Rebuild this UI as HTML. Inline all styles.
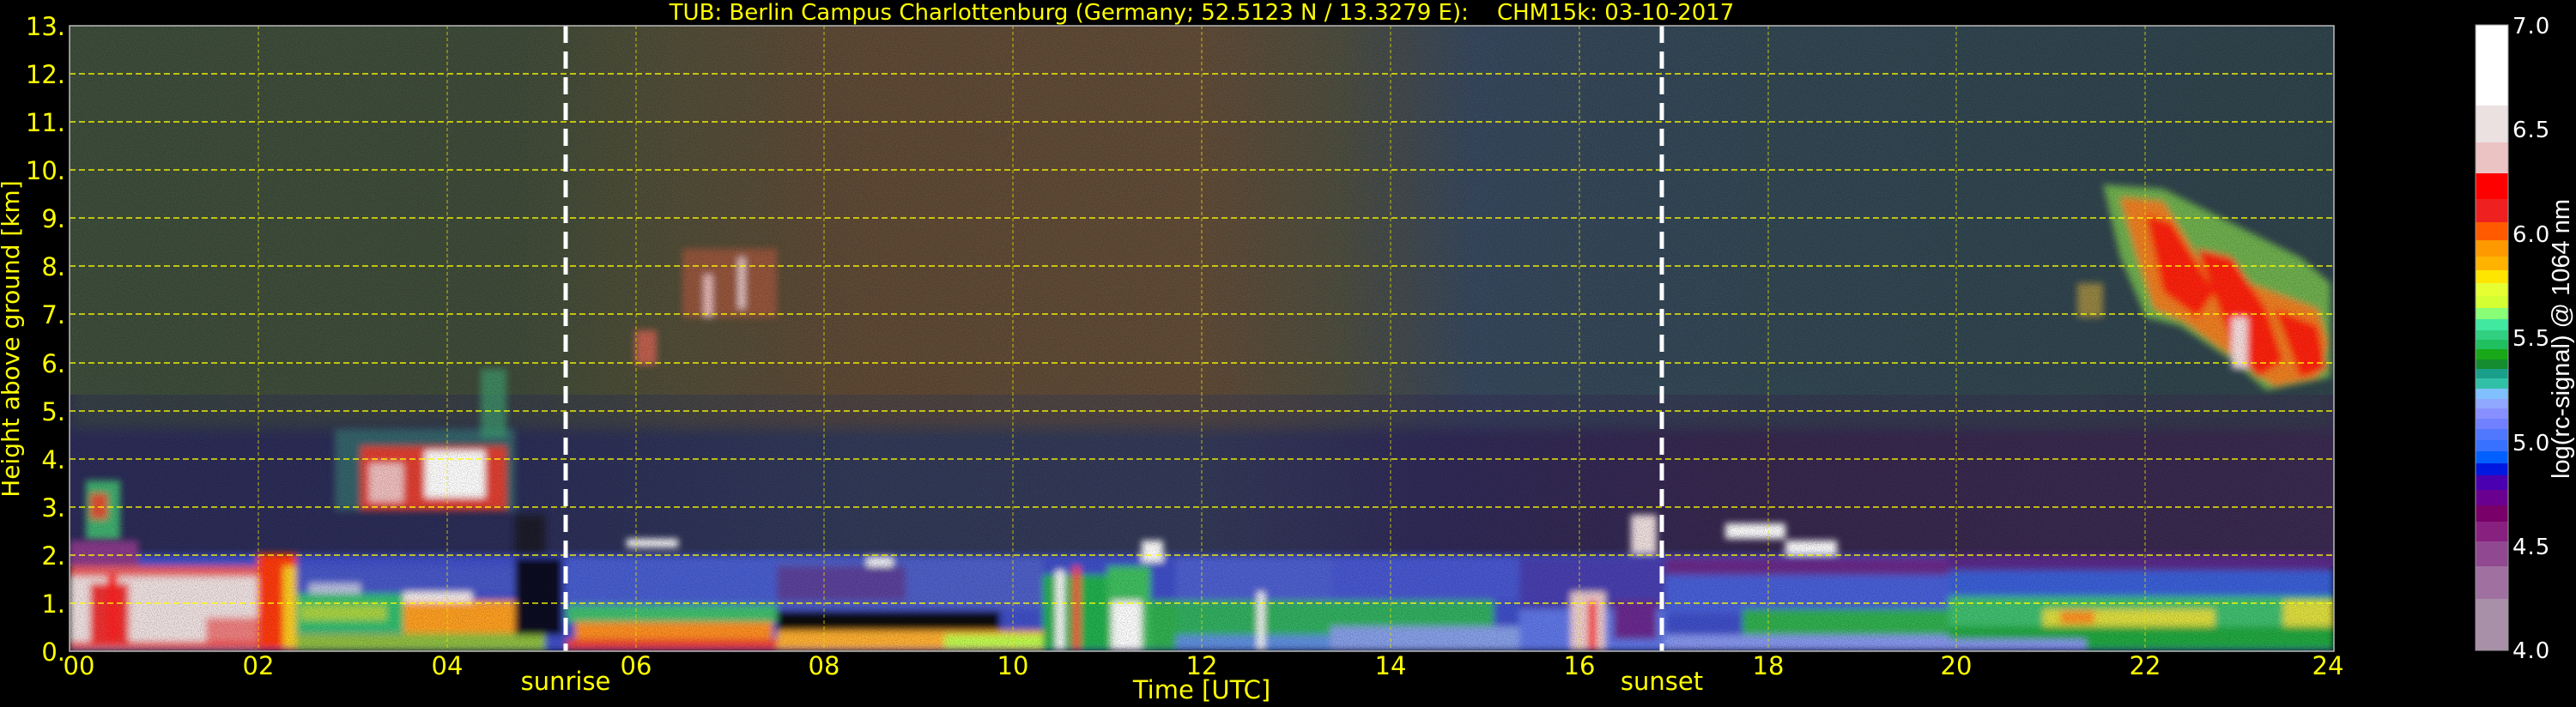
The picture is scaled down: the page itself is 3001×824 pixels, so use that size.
<!DOCTYPE html>
<html><head><meta charset="utf-8"><style>
html,body{margin:0;padding:0;background:#000;}
body{width:3001px;height:824px;overflow:hidden;position:relative;font-family:"Liberation Sans","DejaVu Sans",sans-serif;}
svg{position:absolute;left:0;top:0;}
</style></head><body>
<svg width="3001" height="824" viewBox="0 0 3001 824" xmlns="http://www.w3.org/2000/svg">
<defs>
<linearGradient id="up" x1="81" x2="2719" y1="0" y2="0" gradientUnits="userSpaceOnUse">
<stop offset="0" stop-color="#3e4e3c"/><stop offset="0.2" stop-color="#404c3a"/>
<stop offset="0.26" stop-color="#504e38"/><stop offset="0.35" stop-color="#604a36"/>
<stop offset="0.5" stop-color="#624c38"/><stop offset="0.56" stop-color="#4e4e40"/>
<stop offset="0.62" stop-color="#38485e"/><stop offset="0.75" stop-color="#334854"/>
<stop offset="1" stop-color="#30444c"/></linearGradient>
<linearGradient id="mid" x1="81" x2="2719" y1="0" y2="0" gradientUnits="userSpaceOnUse">
<stop offset="0" stop-color="#2c2c58"/><stop offset="0.2" stop-color="#2c2e58"/>
<stop offset="0.35" stop-color="#323a58"/><stop offset="0.5" stop-color="#343a58"/>
<stop offset="0.6" stop-color="#302a58"/><stop offset="0.75" stop-color="#38284e"/>
<stop offset="1" stop-color="#3a2a50"/></linearGradient>
<filter id="b3" x="-5%" y="-5%" width="110%" height="110%"><feGaussianBlur stdDeviation="4"/></filter>
<filter id="b8" x="-20%" y="-20%" width="140%" height="140%"><feGaussianBlur stdDeviation="8"/></filter>
<filter id="nz" x="0" y="0" width="100%" height="100%">
<feTurbulence type="fractalNoise" baseFrequency="0.9" numOctaves="1" seed="3"/>
<feColorMatrix values="0 0 0 0 0  0 0 0 0 0  0 0 0 0 0  0 0 0 -2.2 1.3"/></filter>
<clipPath id="pc"><rect x="81" y="30" width="2638" height="729"/></clipPath>
</defs>
<g clip-path="url(#pc)">
<rect x="81" y="30" width="2638" height="470" fill="url(#up)"/>
<rect x="81" y="460" width="2638" height="200" fill="url(#mid)"/>
<rect x="81" y="440" width="2638" height="60" fill="url(#up)" filter="url(#b8)" opacity="0.6"/>
<g filter="url(#b3)">
<rect x="795" y="290" width="110" height="80" fill="#b05a40" opacity="0.7"/>
<rect x="820" y="320" width="10" height="50" fill="#f0c0c0"/>
<rect x="860" y="300" width="8" height="60" fill="#f0d0d0"/>
<rect x="740" y="385" width="25" height="40" fill="#c06050"/>
<rect x="100" y="560" width="40" height="70" fill="#40b070"/>
<rect x="105" y="575" width="20" height="30" fill="#e05030"/>
<polygon points="2450,215 2520,220 2600,260 2680,300 2715,330 2715,440 2640,455 2600,420 2540,380 2500,370 2470,300" fill="#70b050"/>
<polygon points="2470,230 2520,235 2560,300 2620,330 2700,360 2712,400 2700,440 2650,450 2600,415 2545,375 2510,360 2490,300" fill="#f08020"/>
<polygon points="2500,250 2530,260 2580,340 2560,370 2520,340" fill="#ff2010"/>
<polygon points="2560,290 2600,300 2640,360 2660,420 2630,440 2600,400" fill="#ff2010"/>
<polygon points="2650,360 2700,380 2710,430 2680,440" fill="#ff2010"/>
<rect x="2600" y="370" width="18" height="60" fill="#f8e0e0"/>
<rect x="2420" y="330" width="30" height="40" fill="#c0a040" opacity="0.7"/>
<rect x="390" y="500" width="210" height="95" fill="#3a7070" opacity="0.8"/>
<rect x="420" y="520" width="170" height="75" fill="#e04030"/>
<rect x="495" y="525" width="70" height="55" fill="#ffffff"/>
<rect x="430" y="540" width="40" height="45" fill="#f0c0c0"/>
<rect x="560" y="430" width="30" height="80" fill="#40a070" opacity="0.7"/>
<rect x="600" y="600" width="35" height="50" fill="#1a1a2a"/>
</g>
<g filter="url(#b3)">
<rect x="81" y="646" width="2638" height="113" fill="#4050c8"/>
<rect x="81" y="660" width="232" height="97" fill="#f0e2e2"/>
<rect x="81" y="660" width="232" height="12" fill="#f06060"/>
<rect x="105" y="680" width="45" height="75" fill="#f03030"/>
<rect x="125" y="670" width="12" height="85" fill="#ff2020"/>
<rect x="240" y="720" width="60" height="30" fill="#f08080"/>
<rect x="81" y="748" width="232" height="8" fill="#f04040"/>
<rect x="81" y="630" width="80" height="30" fill="#8a3a8a"/>
<rect x="300" y="645" width="45" height="112" fill="#ff3a10"/>
<rect x="330" y="660" width="15" height="95" fill="#ffd020"/>
<rect x="345" y="660" width="290" height="32" fill="#4858c8"/>
<rect x="345" y="692" width="130" height="45" fill="#30c070"/>
<rect x="470" y="700" width="160" height="40" fill="#ffa020"/>
<rect x="350" y="705" width="100" height="18" fill="#e0e030" opacity="0.7"/>
<rect x="345" y="738" width="290" height="20" fill="#90c040"/>
<rect x="470" y="690" width="80" height="12" fill="#f8f0f0"/>
<rect x="360" y="680" width="60" height="12" fill="#f0f0f0" opacity="0.7"/>
<rect x="600" y="650" width="55" height="90" fill="#0a0a20"/>
<rect x="660" y="650" width="245" height="55" fill="#4a5ed0"/>
<rect x="660" y="705" width="245" height="20" fill="#40c070"/>
<rect x="670" y="725" width="230" height="20" fill="#ff9020"/>
<rect x="660" y="745" width="245" height="12" fill="#f04030"/>
<rect x="905" y="650" width="310" height="60" fill="#5060c8"/>
<rect x="905" y="660" width="150" height="40" fill="#603888" opacity="0.7"/>
<rect x="905" y="712" width="260" height="25" fill="#100810"/>
<rect x="905" y="735" width="310" height="22" fill="#ffb030"/>
<rect x="1100" y="740" width="115" height="15" fill="#c0ff50"/>
<rect x="1215" y="670" width="75" height="87" fill="#20b050"/>
<rect x="1230" y="665" width="10" height="92" fill="#ffffff"/>
<rect x="1250" y="660" width="8" height="97" fill="#ff4040"/>
<rect x="1290" y="660" width="50" height="97" fill="#40c060"/>
<rect x="1295" y="700" width="35" height="57" fill="#ffffff"/>
<rect x="1340" y="700" width="30" height="57" fill="#30b050"/>
<rect x="1370" y="650" width="180" height="50" fill="#5060d0"/>
<rect x="1370" y="700" width="180" height="45" fill="#30b060"/>
<rect x="1370" y="740" width="180" height="17" fill="#6090e0"/>
<rect x="1465" y="690" width="8" height="67" fill="#ffffff"/>
<rect x="1550" y="650" width="220" height="50" fill="#4a58d0"/>
<rect x="1550" y="700" width="190" height="40" fill="#30b060"/>
<rect x="1550" y="730" width="220" height="27" fill="#88a0e8"/>
<rect x="1770" y="650" width="170" height="60" fill="#4a40b0"/>
<rect x="1770" y="710" width="170" height="47" fill="#6078e8"/>
<rect x="1830" y="690" width="40" height="67" fill="#f0d0d0"/>
<rect x="1850" y="700" width="10" height="57" fill="#ff3030"/>
<rect x="1880" y="700" width="50" height="45" fill="#6a2a90"/>
<rect x="1940" y="650" width="330" height="20" fill="#6a2a8a"/>
<rect x="1940" y="670" width="330" height="45" fill="#4a60d8"/>
<rect x="2030" y="710" width="240" height="30" fill="#30b050"/>
<rect x="1940" y="740" width="330" height="17" fill="#8898f0"/>
<rect x="2270" y="646" width="449" height="24" fill="#5a2a8a"/>
<rect x="2270" y="665" width="449" height="30" fill="#3a60d8"/>
<rect x="2270" y="695" width="449" height="35" fill="#40c070"/>
<rect x="2380" y="710" width="200" height="25" fill="#e0e040"/>
<rect x="2400" y="712" width="40" height="15" fill="#ff9020"/>
<rect x="2660" y="700" width="59" height="35" fill="#e0e040"/>
<rect x="2270" y="730" width="449" height="27" fill="#20a840"/>
<rect x="2270" y="745" width="160" height="12" fill="#8898f0"/>
<rect x="730" y="628" width="60" height="10" fill="#ffffff"/>
<rect x="2010" y="610" width="70" height="18" fill="#ffffff"/>
<rect x="2080" y="630" width="60" height="16" fill="#ffffff"/>
<rect x="1900" y="600" width="30" height="45" fill="#f0e0e0"/>
<rect x="1010" y="650" width="30" height="10" fill="#ffffff"/>
<rect x="1330" y="630" width="25" height="25" fill="#ffffff"/>
</g>
<rect x="81" y="30" width="2638" height="729" filter="url(#nz)" opacity="0.3"/>
<g stroke="#ffff00" stroke-width="1.5" stroke-dasharray="7,4" opacity="0.9">
<line x1="81" x2="2719" y1="703" y2="703"/><line x1="81" x2="2719" y1="647" y2="647"/>
<line x1="81" x2="2719" y1="591" y2="591"/><line x1="81" x2="2719" y1="535" y2="535"/>
<line x1="81" x2="2719" y1="479" y2="479"/><line x1="81" x2="2719" y1="423" y2="423"/>
<line x1="81" x2="2719" y1="366" y2="366"/><line x1="81" x2="2719" y1="310" y2="310"/>
<line x1="81" x2="2719" y1="254" y2="254"/><line x1="81" x2="2719" y1="198" y2="198"/>
<line x1="81" x2="2719" y1="142" y2="142"/><line x1="81" x2="2719" y1="86" y2="86"/>
</g>
<g stroke="#e8e000" stroke-width="1" stroke-dasharray="4,3" opacity="0.8">
<line y1="30" y2="759" x1="301" x2="301"/><line y1="30" y2="759" x1="521" x2="521"/>
<line y1="30" y2="759" x1="741" x2="741"/><line y1="30" y2="759" x1="960" x2="960"/>
<line y1="30" y2="759" x1="1180" x2="1180"/><line y1="30" y2="759" x1="1400" x2="1400"/>
<line y1="30" y2="759" x1="1620" x2="1620"/><line y1="30" y2="759" x1="1840" x2="1840"/>
<line y1="30" y2="759" x1="2060" x2="2060"/><line y1="30" y2="759" x1="2279" x2="2279"/>
<line y1="30" y2="759" x1="2499" x2="2499"/>
</g>
<g stroke="#ffffff" stroke-width="5" stroke-dasharray="20,10">
<line x1="659" x2="659" y1="30" y2="759"/><line x1="1936" x2="1936" y1="30" y2="759"/>
</g>
</g>
<rect x="81" y="30" width="2638" height="729" fill="none" stroke="#bbbbbb" stroke-width="1.5"/>
<g>
<rect x="2884" y="29" width="38" height="94" fill="#ffffff"/>
<rect x="2884" y="123" width="38" height="43" fill="#ebe1e1"/>
<rect x="2884" y="166" width="38" height="36" fill="#ecc3c3"/>
<rect x="2884" y="202" width="38" height="30" fill="#ff0000"/>
<rect x="2884" y="232" width="38" height="27" fill="#ef2020"/>
<rect x="2884" y="259" width="38" height="21" fill="#ff5a00"/>
<rect x="2884" y="280" width="38" height="19" fill="#ff9900"/>
<rect x="2884" y="299" width="38" height="16" fill="#ffb300"/>
<rect x="2884" y="315" width="38" height="15" fill="#ffe600"/>
<rect x="2884" y="330" width="38" height="15" fill="#e6ff33"/>
<rect x="2884" y="345" width="38" height="14" fill="#d4ff33"/>
<rect x="2884" y="359" width="38" height="13" fill="#88ff77"/>
<rect x="2884" y="372" width="38" height="13" fill="#40e8a0"/>
<rect x="2884" y="385" width="38" height="11" fill="#30d080"/>
<rect x="2884" y="396" width="38" height="11" fill="#20c060"/>
<rect x="2884" y="407" width="38" height="12" fill="#18a818"/>
<rect x="2884" y="419" width="38" height="11" fill="#148c30"/>
<rect x="2884" y="430" width="38" height="11" fill="#1aa08a"/>
<rect x="2884" y="441" width="38" height="12" fill="#30c0a8"/>
<rect x="2884" y="453" width="38" height="12" fill="#80c0ff"/>
<rect x="2884" y="465" width="38" height="11" fill="#90a8ff"/>
<rect x="2884" y="476" width="38" height="12" fill="#8890ff"/>
<rect x="2884" y="488" width="38" height="12" fill="#7080ff"/>
<rect x="2884" y="500" width="38" height="13" fill="#5078ff"/>
<rect x="2884" y="513" width="38" height="13" fill="#3870ff"/>
<rect x="2884" y="526" width="38" height="14" fill="#0060ff"/>
<rect x="2884" y="540" width="38" height="14" fill="#0018e0"/>
<rect x="2884" y="554" width="38" height="17" fill="#4a00b0"/>
<rect x="2884" y="571" width="38" height="18" fill="#6a0090"/>
<rect x="2884" y="589" width="38" height="19" fill="#780068"/>
<rect x="2884" y="608" width="38" height="23" fill="#882080"/>
<rect x="2884" y="631" width="38" height="29" fill="#904890"/>
<rect x="2884" y="660" width="38" height="38" fill="#a070a0"/>
<rect x="2884" y="698" width="38" height="60" fill="#a890a8"/>
<rect x="2884" y="29" width="38" height="729" fill="none" stroke="#999" stroke-width="1"/>
</g>
<g fill="#ffffff" font-family="'DejaVu Sans',sans-serif" font-size="26" letter-spacing="1">
<text x="2927" y="39">7.0</text><text x="2927" y="160">6.5</text><text x="2927" y="282">6.0</text>
<text x="2927" y="403">5.5</text><text x="2927" y="525">5.0</text><text x="2927" y="646">4.5</text>
<text x="2927" y="767">4.0</text>
</g>
<text transform="translate(2993,395) rotate(-90)" text-anchor="middle" fill="#ffffff" font-family="'Liberation Sans',sans-serif" font-size="29">log(rc-signal) @ 1064 nm</text>
<text x="1400" y="23" text-anchor="middle" fill="#ffff00" font-family="'DejaVu Sans',sans-serif" font-size="26" xml:space="preserve">TUB: Berlin Campus Charlottenburg (Germany; 52.5123 N / 13.3279 E):    CHM15k: 03-10-2017</text>
<g fill="#ffff00" font-family="'DejaVu Sans',sans-serif" font-size="29" text-anchor="end">
<text x="76" y="41">13.</text><text x="76" y="97">12.</text><text x="76" y="153">11.</text>
<text x="76" y="209">10.</text><text x="76" y="265">9.</text><text x="76" y="321">8.</text>
<text x="76" y="377">7.</text><text x="76" y="434">6.</text><text x="76" y="490">5.</text>
<text x="76" y="546">4.</text><text x="76" y="602">3.</text><text x="76" y="658">2.</text>
<text x="76" y="714">1.</text><text x="76" y="770">0.</text>
</g>
<text transform="translate(22,395) rotate(-90)" text-anchor="middle" fill="#ffff00" font-family="'DejaVu Sans',sans-serif" font-size="28">Height above ground [km]</text>
<g fill="#ffff00" font-family="'DejaVu Sans',sans-serif" font-size="29" text-anchor="middle">
<text x="92" y="786">00</text><text x="301" y="786">02</text><text x="521" y="786">04</text>
<text x="741" y="786">06</text><text x="960" y="786">08</text><text x="1180" y="786">10</text>
<text x="1400" y="786">12</text><text x="1620" y="786">14</text><text x="1840" y="786">16</text>
<text x="2060" y="786">18</text><text x="2279" y="786">20</text><text x="2499" y="786">22</text>
<text x="2712" y="786">24</text>
<text x="1400" y="814">Time [UTC]</text>
<text x="659" y="804">sunrise</text><text x="1936" y="804">sunset</text>
</g>
</svg>
</body></html>
